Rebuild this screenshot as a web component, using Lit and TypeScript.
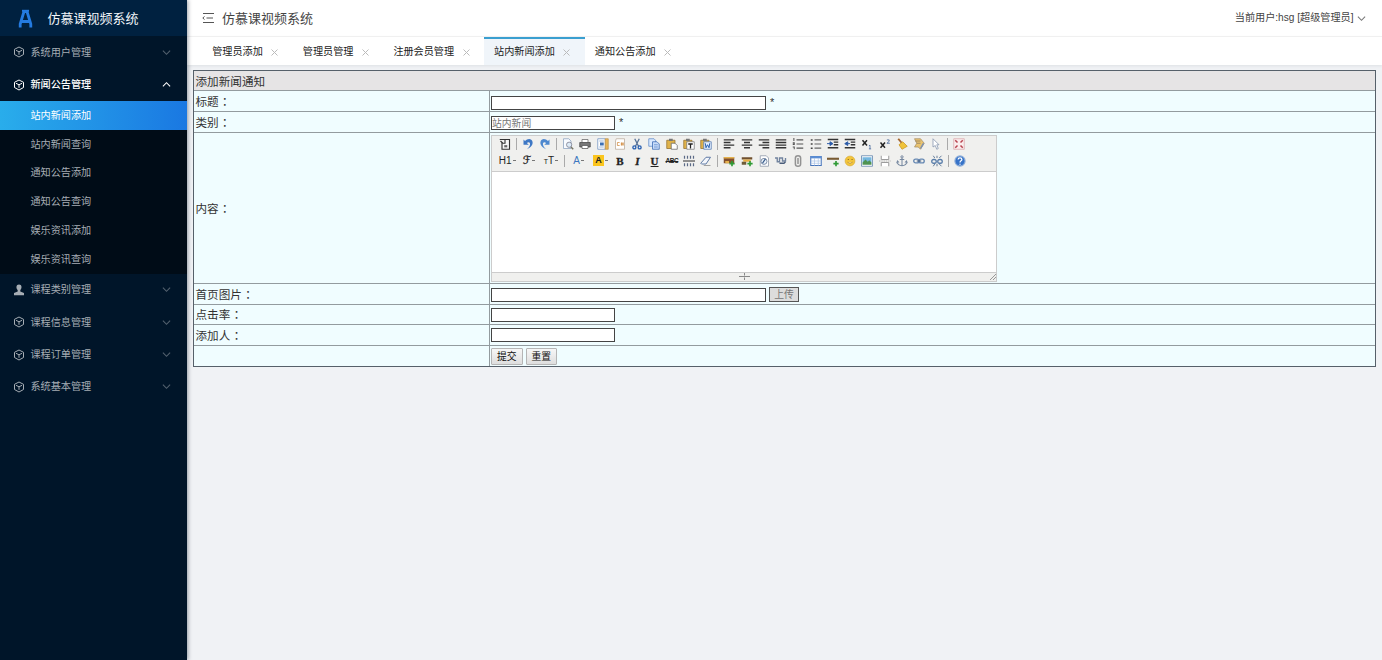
import { LitElement, html, svg, css } from "lit";
import { customElement } from "lit/decorators.js";
import { classMap } from "lit/directives/class-map.js";

const page = svg`<path d="M3 1h8l3 3v11H3z" fill="#fff" stroke="#8a94a6"/>`;
const clip = svg`<path d="M1 3h11v11H1z" fill="#e0b34a" stroke="#94702c"/><path d="M4 1h5v3H4z" fill="#777"/>`;
const lines = (a: string) => svg`<path d=${a} stroke="#333" stroke-width="1.900" fill="none"/>`;
const plus = svg`<path d="M12 8v7M8.5 11.500h7" stroke="#2f9a35" stroke-width="2.200"/>`;

const icons: Record<string, unknown> = {
  source: svg`<path d="M4 6v9h10V2H8" fill="#f7f7f7" stroke="#333" stroke-width="1.500"/><path d="M1 2h7v5H5L2 4" fill="none" stroke="#333" stroke-width="1.500"/><path d="M7 9.500h4v3H7z" fill="#666"/>`,
  undo: svg`<path d="M2 2v7h7L6.500 6.500c3-2 5 0 4 3-.5 2-2 3.500-4 5.500 5-2 8.500-6 7.500-10C13 .5 7.500 0 4 4z" fill="#3e78c5"/>`,
  redo: svg`<path d="M14 2v7H7l2.500-2.500c-3-2-5 0-4 3 .5 2 2 3.500 4 5.500-5-2-8.500-6-7.500-10C3 .5 8.500 0 12 4z" fill="#4d88cf"/>`,
  preview: svg`<path d="M2 1h7l3 3v10H2z" fill="#f8fbff" stroke="#8aa0bd"/><circle cx="9.500" cy="9" r="3.500" fill="#dcebf7" stroke="#778"/><path d="M12 12l3 3" stroke="#776" stroke-width="2"/>`,
  print: svg`<path d="M4 6V2h8v4" fill="#fff" stroke="#666"/><path d="M1 6h14v6H1z" fill="#777" stroke="#444"/><path d="M4 10h8v4H4z" fill="#fff" stroke="#555"/>`,
  template: svg`<path d="M1 1h10v14H1z" fill="#fff" stroke="#6c8fc2"/><path d="M11 1h4v14h-4z" fill="#e7b458" stroke="#c09448"/><path d="M3 4h6M3 12h6" stroke="#7ba0d4"/><path d="M4 6h5v4H4z" fill="#3b6fb5"/>`,
  code: svg`<path d="M3 1h11v14H2V4z" fill="#fff" stroke="#b8aa9a"/><path d="M7.500 6H4.500v4h3M9 7h4M9 9h4M10 6v4M12 6v4" stroke="#d0893c" fill="none"/>`,
  cut: svg`<path d="M5 1l5 10M11 1L6 11" stroke="#567197" stroke-width="1.700"/><circle cx="4.500" cy="12.500" r="2" fill="none" stroke="#2c62b2" stroke-width="1.800"/><circle cx="11.500" cy="12.500" r="2" fill="none" stroke="#2c62b2" stroke-width="1.800"/>`,
  copy: svg`<path d="M1 1h7l2 2v8H1z" fill="#dbeaff" stroke="#5d88c6"/><path d="M6 5h6l3 3v7H6z" fill="#c8dcfa" stroke="#3567b1"/><path d="M8 9h5M8 12h5" stroke="#5b87c7"/>`,
  paste: svg`${clip}<path d="M7 7h5l3 3v5H7z" fill="#fff" stroke="#666"/>`,
  ptext: svg`${clip}<path d="M5 5h10v10H5z" fill="#fff" stroke="#777"/><path d="M7 8h6M10 8v6" stroke="#222" stroke-width="1.700"/>`,
  pword: svg`${clip}<path d="M5 5h10v10H5z" fill="#e8f2ff" stroke="#5277ae"/><path d="M7 7l1 6 2-4 2 4 1-6" fill="none" stroke="#245eae" stroke-width="1.300"/>`,
  left: lines("M1 2.500h14M1 6h9M1 9.500h14M1 13h9"),
  center: lines("M1 2.500h14M4 6h8M1 9.500h14M4 13h8"),
  right: lines("M1 2.500h14M6 6h9M1 9.500h14M6 13h9"),
  full: lines("M1 2.500h14M1 6h14M1 9.500h14M1 13h14"),
  ol: svg`<path d="M2.500 0v4M1 6.500h2v2H1M1 12h2v3M6 2.500h9M6 8h9M6 13.500h9" fill="none" stroke="#555" stroke-width="1.400"/>`,
  ul: svg`<path d="M1 2.500h2.500M1 8h2.500M1 13.500h2.500" stroke="#444" stroke-width="2"/><path d="M6 2.500h9M6 8h9M6 13.500h9" stroke="#666" stroke-width="1.400"/>`,
  indent: svg`${lines("M1 2h14M9 5.500h6M9 9h6M1 13h14")}<path d="M0 7.500h5M4 5l4 2.500-4 2.500z" fill="#2c5ba8" stroke="#2c5ba8" stroke-width="1.300"/>`,
  outdent: svg`${lines("M1 2h14M9 5.500h6M9 9h6M1 13h14")}<path d="M4 7.500h4M5 5L1 7.500 5 10z" fill="#2c5ba8" stroke="#2c5ba8" stroke-width="1.300"/>`,
  sub: svg`<path d="M2 3l6 7M8 3l-6 7" stroke="#222" stroke-width="2"/><path d="M12 9.500v5M10.500 10.500l1.500-1M10.500 14.500h3" stroke="#3c5f96"/>`,
  sup: svg`<path d="M2 6l6 7M8 6l-6 7" stroke="#222" stroke-width="2"/><path d="M10.500 2.500h3v2l-3 2.500h4" stroke="#3c5f96" fill="none"/>`,
  brush: svg`<path d="M3 1l5 6" stroke="#a4652e" stroke-width="2.500"/><path d="M4 9l5-4 6 6-7 4z" fill="#f0c33b" stroke="#c99722"/>`,
  format: svg`<path d="M2 1h8l5 6-5 8-3-3H2l3-5z" fill="#e9c36f" stroke="#a48d65"/><path d="M3 4h7M5 7h5" stroke="#8d7a60"/><path d="M14 7l-4 7" stroke="#7a90b5" stroke-width="2"/>`,
  cursor: svg`<path d="M4 1l8 8H9l2 5-2 1-2-5-3 2z" fill="#fff" stroke="#8192ab"/>`,
  screen: svg`<path d="M1 1h14v14H1z" fill="#fbeeee" stroke="#d9a5aa"/><path d="M3 3l3 3M13 3l-3 3M3 13l3-3M13 13l-3-3" stroke="#b94450" stroke-width="2"/>`,
  hr3: svg`<path d="M2 1v4M6 1v4M10 1v4M14 1v4M2 11v4M6 11v4M10 11v4M14 11v4" stroke="#5b6a86" stroke-width="1.600"/><path d="M0 8h16" stroke="#444" stroke-width="1.500"/>`,
  eraser: svg`<path d="M1 11l7-8h6l-6 9H2z" fill="#f3f6fb" stroke="#5b77a3" stroke-width="1.300"/><path d="M5 14h9" stroke="#888"/>`,
  flash: svg`<path d="M1 3h14v8H1z" fill="#83502d"/><path d="M1 2.500h14v2H1zM3 8h5v3H3z" fill="#e5b24e"/>${plus}`,
  media: svg`<path d="M1 3h14v3H1z" fill="#70502e"/><path d="M3 6h10v3H3z" fill="#e8ae42"/><path d="M1 9h6v4H1z" fill="#6d5b39"/>${plus}`,
  file: svg`${page}<circle cx="8" cy="8.500" r="4" fill="#eaf2fb" stroke="#5e7290"/><path d="M6 11l4-6" stroke="#345786" stroke-width="1.700"/>`,
  map: svg`<path d="M0 4h3v5h3V4h4v4h4V4" fill="none" stroke="#71839e" stroke-width="1.800"/><path d="M6 11h6l2-2" stroke="#4a5d7a" stroke-width="1.800" fill="none"/>`,
  attach: svg`<path d="M4.500 5v7c0 4 7 4 7 0V4c0-4-7-4-7 0v7M8 4v8" fill="none" stroke="#929292" stroke-width="2"/>`,
  table: svg`<path d="M1 2h14v12H1z" fill="#fff" stroke="#4775bb" stroke-width="1.400"/><path d="M1 3h14" stroke="#5c8ed4" stroke-width="3"/><path d="M1 8h14M1 11h14M6 4v10M11 4v10" stroke="#adc6e7"/>`,
  rule: svg`<path d="M0 5h16" stroke="#795b33" stroke-width="2.800"/>${plus}`,
  smile: svg`<circle cx="8" cy="8" r="6.500" fill="#f3c53a" stroke="#d9ae3b"/><path d="M5 6h1.500M10 6h1.500" stroke="#8c6a24" stroke-width="1.500"/><path d="M4.500 9.500q3.500 3.500 7 0" fill="#fbe9a8" stroke="#b3862a"/>`,
  image: svg`<path d="M.7 1h14.600v14H.7z" fill="#fff" stroke="#587da8"/><path d="M2 3h12v7H2z" fill="#75b7df"/><path d="M2 10l4-4 3 3 2-2 3 3v3H2z" fill="#4f9351"/>`,
  break: svg`<path d="M3 1v5h10V1M3 15v-5h10v5" fill="#fff" stroke="#999" stroke-width="1.300"/><path d="M0 8h16" stroke="#aaa" stroke-dasharray="2 1"/>`,
  anchor: svg`<circle cx="8" cy="2.500" r="1.500" fill="none" stroke="#7688a0" stroke-width="1.300"/><path d="M8 4v10M5 6h6M1.500 9c1 7 12 7 13 0M1 11l1-3 2 2M15 11l-1-3-2 2" fill="none" stroke="#7688a0" stroke-width="1.400"/>`,
  link: svg`<rect x="1" y="5.500" width="7" height="5" rx="2.500" fill="none" stroke="#6688b2" stroke-width="1.800"/><rect x="8" y="5.500" width="7" height="5" rx="2.500" fill="none" stroke="#6688b2" stroke-width="1.800"/><path d="M5 8h6" stroke="#455e80" stroke-width="1.500"/>`,
  unlink: svg`<rect x="1" y="6" width="6" height="5" rx="2.500" fill="none" stroke="#567ba8" stroke-width="1.700"/><rect x="9" y="6" width="6" height="5" rx="2.500" fill="none" stroke="#567ba8" stroke-width="1.700"/><path d="M5 4L3 1M8 4V1M11 4l3-3M5 12l-2 3M8 12v3M11 12l3 3" stroke="#647b99" stroke-width="1.300"/>`,
  help: svg`<circle cx="8" cy="8" r="6.800" fill="#3773c8" stroke="#8cadd9" stroke-width="1.500"/><path d="M5.500 6c0-3 5-3 5 0 0 2-2.500 1.500-2.500 4M8 11.500v1.500" fill="none" stroke="#fff" stroke-width="1.700"/>`,
};

const row1 = "source | undo redo | preview print template code cut copy paste ptext pword | left center right full ol ul indent outdent sub sup brush format cursor | screen".split(" ");
const row2 = "H1 F TT | A AB B I U ABC hr3 eraser | flash media file map attach table rule smile image break anchor link unlink | help".split(" ");

const chevron = (up = false) => html`<svg class="chev" viewBox="0 0 10 10"><path d=${up ? "M1 7l4-4 4 4" : "M1 3l4 4 4-4"} fill="none" stroke="currentColor" stroke-width="1.200"/></svg>`;
const cube = html`<svg class="mi" viewBox="0 0 12 12"><path d="M6 1l4.500 2.300v5.200L6 11 1.500 8.500V3.300z" fill="none" stroke="currentColor" stroke-linejoin="round"/><path d="M3 4.300l3 1.500 3-1.500M6 5.800v3" fill="none" stroke="currentColor"/></svg>`;
const person = html`<svg class="mi" viewBox="0 0 12 12"><path d="M6 .5c-3 0-3.200 3.500-1.300 5.700v1.200L1 9v2.200h10V9L7.300 7.400V6.200C9.200 4 9 .5 6 .5z" fill="currentColor"/></svg>`;

@customElement("editor-toolbar")
class EditorToolbar extends LitElement {
  static styles = css`
    :host { display: block; box-sizing: border-box; height: 36px; padding: .5px 0 0 4.200px; background: #f0f0ee; border-bottom: 1px solid #ccc; font-family: "Liberation Sans", sans-serif; }
    .row { display: flex; height: 16.500px; align-items: center; }
    .cell { flex: none; width: 17.280px; display: flex; align-items: center; justify-content: center; font-size: 10px; line-height: 12px; color: #222; }
    .cell svg { width: 12px; height: 12px; }
    .wide { width: 21.900px; }
    .wide::after { content: ""; width: 3px; height: 1px; background: #777; margin-left: 1px; }
    .sep { flex: none; width: 5.760px; display: flex; justify-content: center; }
    .sep::before { content: ""; width: 1px; height: 12px; background: #aaa; }
    .serif { font-family: "Liberation Serif", serif; font-weight: bold; font-size: 11px; -webkit-text-stroke: .3px #222; }
    .script { font-family: "DejaVu Sans", "DejaVu Serif", sans-serif; font-size: 11px; -webkit-text-stroke: .3px #222; }
    .it { font-style: italic; }
    .un { text-decoration: underline; }
    .abc { font-size: 6.500px; letter-spacing: -.5px; font-weight: bold; text-decoration: line-through; text-decoration-thickness: .5px; }
    .blue { color: #3c78c0; }
    .hl { background: #fbc51d; width: 11px; height: 11px; line-height: 11px; text-align: center; font-weight: bold; font-size: 9px; }
    .small { font-size: 7px; padding-top: 2px; }
  `;
  item(n: string) {
    if (n === "|") return html`<span class="sep"></span>`;
    switch (n) {
      case "H1": return html`<span class="cell wide">H1</span>`;
      case "F": return html`<span class="cell wide"><span class="script">ℱ</span></span>`;
      case "TT": return html`<span class="cell wide"><span class="small">T</span>T</span>`;
      case "A": return html`<span class="cell wide"><span class="blue">A</span></span>`;
      case "AB": return html`<span class="cell wide"><span class="hl">A</span></span>`;
      case "B": return html`<span class="cell serif">B</span>`;
      case "I": return html`<span class="cell serif it">I</span>`;
      case "U": return html`<span class="cell serif un">U</span>`;
      case "ABC": return html`<span class="cell abc">ABC</span>`;
    }
    return html`<span class="cell"><svg viewBox="0 0 16 16">${icons[n]}</svg></span>`;
  }
  render() {
    return html`<div class="row">${row1.map((n) => this.item(n))}</div><div class="row">${row2.map((n) => this.item(n))}</div>`;
  }
}

@customElement("app-root")
class AppRoot extends LitElement {
  static styles = css`
    :host { display: flex; width: 1382px; height: 660px; overflow: hidden; background: #f0f2f5; font: 10.150px/1.200 "Liberation Sans", "Noto Sans CJK SC", sans-serif; color: #333; }
    * { box-sizing: border-box; }
    .side { width: 187px; flex: none; background: #001529; color: #a6adb4; box-shadow: 1px 0 4px rgba(0, 21, 41, .4); z-index: 1; }
    .brand { height: 36px; display: flex; align-items: center; background: #002140; color: #f2f6fa; font-size: 13px; padding: 1px 0 0 18px; }
    .brand svg { width: 15px; height: 19px; margin-right: 14.500px; }
    .group { height: 32.400px; display: flex; align-items: center; padding: 0 16px 0 13px; }
    .group span { padding-top: 1px; }
    .group.open { color: #fff; font-weight: 500; }
    .mi { width: 12px; height: 12px; margin-right: 5.500px; }
    .chev { width: 9px; height: 9px; margin-left: auto; }
    .group .chev { opacity: .5; }
    .group.open .chev { opacity: 1; }
    .sub { background: #000c17; height: 172.800px; }
    .leaf { height: 28.800px; display: flex; align-items: center; padding: 1.500px 0 0 30.500px; }
    .leaf.on { color: #fff; background: linear-gradient(90deg, #29adeb, #1a78e2); }
    .main { flex: 1; min-width: 0; }
    .top { height: 37px; background: #fff; border-bottom: 1px solid #f3f3f3; display: flex; align-items: center; padding: 0 16px 0 15px; color: #444; }
    .top h1 { font-size: 13px; font-weight: 400; margin: 0 auto 0 8px; padding-top: 1px; }
    .top .fold { width: 12px; height: 12px; }
    .top .chev { margin-left: 3.500px; color: #777; }
    .tabs { height: 28px; background: #fff; display: flex; padding-left: 15px; box-shadow: 0 1px 3px rgba(0, 21, 41, .08); color: #222; }
    .tab { display: flex; align-items: center; padding: 0 14.200px 0 10.200px; border-top: 2px solid transparent; }
    .tab.on { background: #f0f5fa; border-top-color: #3a9fd0; }
    .tab svg { width: 7px; height: 7px; margin-left: 8.600px; color: #bbb; }
    .form { display: grid; grid-template-columns: 295px 885px; grid-template-rows: 19px 20px 20px 150px 20px 19px 20px 20px; gap: 1px; width: 1183px; margin: 5px 0 0 6px; border: 1px solid #56606a; background: #939b9f; font-size: 11.600px; }
    .form > div { background: #f0fdff; display: flex; align-items: center; padding: 1px 0 0 1.500px; min-width: 0; }
    .form > .head { grid-column: 1 / 3; background: #e6e4e5; padding-top: 2px; }
    .form > .field { padding: 1px 0 0 1px; }
    .form > .low { padding-top: 3px; }
    .form > .flush { padding-top: 0; }
    .colon { font-family: "Noto Sans CJK TC", sans-serif; margin-left: .4px; }
    input { display: block; height: 14px; width: 124px; margin: 0; padding: 0; border: 1px solid #444; border-radius: 0; background: #fff; font: 9.800px/12px "Liberation Sans", "Noto Sans CJK SC", sans-serif; color: #777; }
    input.long { width: 275px; }
    .star { margin-left: 4px; font-size: 11px; }
    button { display: block; font: 9.800px/1 "Liberation Sans", "Noto Sans CJK SC", sans-serif; padding: 1px 0 0; margin: 0 3px 0 0; width: 31.500px; height: 17px; border: 1px solid #b5b5b5; border-radius: 1px; background: linear-gradient(#f7f7f7, #dedede); color: #111; }
    button.up { width: 30px; height: 15px; margin: -1px 0 0 3px; border-color: #555; border-radius: 0; background: #dcdcdc; color: #777; }
    .editor { width: 506px; height: 147px; border: 1px solid #ccc; background: #fff; display: flex; flex-direction: column; }
    .area { flex: 1; }
    .status { height: 9px; background: #f0f0ee; border-top: 1px solid #ccc; display: flex; align-items: center; padding-left: 247px; }
    .status svg { width: 11px; height: 7px; }
    .status .grip { width: 6px; height: 7px; margin-left: auto; }
  `;
  group(label: string, icon: unknown = cube, open = false) {
    return html`<div class=${classMap({ group: true, open })}>${icon}<span>${label}</span>${chevron(open)}</div>`;
  }
  label(text: string) {
    return html`<div>${text}<span class="colon">：</span></div>`;
  }
  render() {
    const leaves = ["站内新闻添加", "站内新闻查询", "通知公告添加", "通知公告查询", "娱乐资讯添加", "娱乐资讯查询"];
    const tabs = ["管理员添加", "管理员管理", "注册会员管理", "站内新闻添加", "通知公告添加"];
    return html`
      <nav class="side">
        <div class="brand"><svg viewBox="0 0 15 19"><path d="M2.200 18.500v-3.500L6 2.500h3L12.800 15v3.500M4 12.500h7" fill="none" stroke="#247be0" stroke-width="2.800"/><path d="M4 1.800h7" stroke="#247be0" stroke-width="2"/></svg>仿慕课视频系统</div>
        ${this.group("系统用户管理")}${this.group("新闻公告管理", cube, true)}
        <div class="sub">${leaves.map((t, i) => html`<div class=${classMap({ leaf: true, on: i === 0 })}>${t}</div>`)}</div>
        ${this.group("课程类别管理", person)}${this.group("课程信息管理")}${this.group("课程订单管理")}${this.group("系统基本管理")}
      </nav>
      <main class="main">
        <header class="top">
          <svg class="fold" viewBox="0 0 12 12"><path d="M1 1.500h11M4.500 6H11M1 10.500h11M2.500 4.500L.8 6l1.700 1.500" fill="none" stroke="#555"/></svg>
          <h1>仿慕课视频系统</h1><span>当前用户:hsg [超级管理员]</span>${chevron()}
        </header>
        <div class="tabs">${tabs.map((t, i) => html`<div class=${classMap({ tab: true, on: i === 3 })}>${t}<svg viewBox="0 0 7 7"><path d="M.5.5l6 6M6.500.5l-6 6" stroke="currentColor"/></svg></div>`)}</div>
        <section class="form">
          <div class="head">添加新闻通知</div>
          ${this.label("标题")}<div class="field low"><input class="long"><span class="star">*</span></div>
          ${this.label("类别")}<div class="field"><input .value=${"站内新闻"}><span class="star">*</span></div>
          ${this.label("内容")}<div class="field flush"><div class="editor"><editor-toolbar></editor-toolbar><div class="area"></div>
            <div class="status"><svg viewBox="0 0 11 7"><path d="M0 3.500h11M5.500 0v2.500M5.500 4.500V7" stroke="#888"/></svg><svg class="grip" viewBox="0 0 6 7"><path d="M0 7l6-6M3 7l3-3" stroke="#999"/></svg></div></div></div>
          ${this.label("首页图片")}<div class="field"><input class="long"><button class="up">上传</button></div>
          ${this.label("点击率")}<div class="field flush"><input></div>
          ${this.label("添加人")}<div class="field flush"><input></div>
          <div></div><div class="field flush"><button>提交</button><button>重置</button></div>
        </section>
      </main>`;
  }
}
